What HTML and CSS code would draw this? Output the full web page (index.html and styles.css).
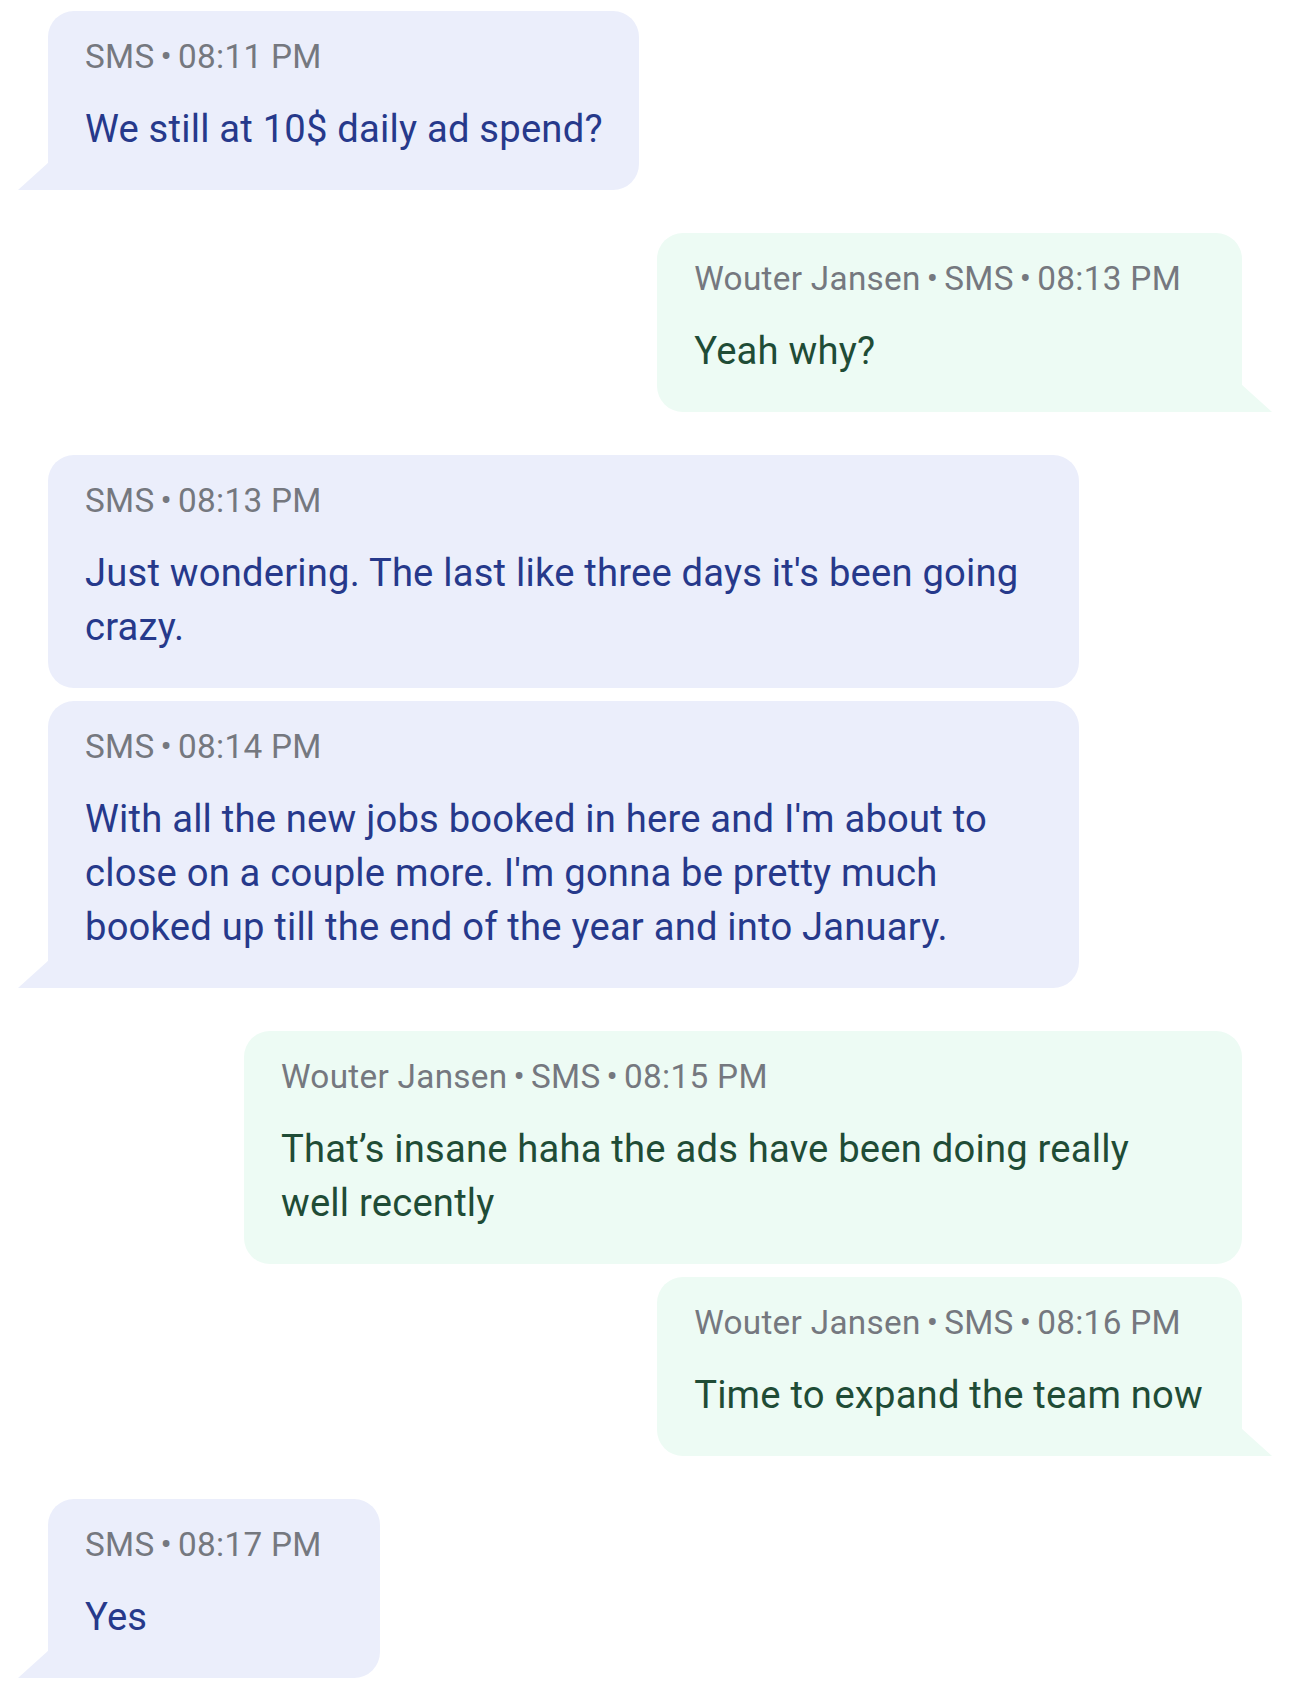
FILE: index.html
```html
<!DOCTYPE html>
<html lang="en">
<head>
<meta charset="utf-8">
<title>SMS conversation</title>
<link rel="stylesheet" href="styles.css">
</head>
<body>
<main class="thread">
  <div class="group">
    <div class="msg msg-in tail">
      <div class="meta">SMS<span class="dot">•</span>08:11 PM</div>
      <div class="text">We still at 10$ daily ad spend?</div>
    </div>
  </div>
  <div class="group">
    <div class="msg msg-out tail">
      <div class="meta">Wouter Jansen<span class="dot">•</span>SMS<span class="dot">•</span>08:13 PM</div>
      <div class="text">Yeah why?</div>
    </div>
  </div>
  <div class="group">
    <div class="msg msg-in">
      <div class="meta">SMS<span class="dot">•</span>08:13 PM</div>
      <div class="text">Just wondering. The last like three days it's been going crazy.</div>
    </div>
    <div class="msg msg-in tail">
      <div class="meta">SMS<span class="dot">•</span>08:14 PM</div>
      <div class="text">With all the new jobs booked in here and I'm about to close on a couple more. I'm gonna be pretty much booked up till the end of the year and into January.</div>
    </div>
  </div>
  <div class="group">
    <div class="msg msg-out">
      <div class="meta">Wouter Jansen<span class="dot">•</span>SMS<span class="dot">•</span>08:15 PM</div>
      <div class="text">That’s insane haha the ads have been doing really well recently</div>
    </div>
    <div class="msg msg-out tail">
      <div class="meta">Wouter Jansen<span class="dot">•</span>SMS<span class="dot">•</span>08:16 PM</div>
      <div class="text">Time to expand the team now</div>
    </div>
  </div>
  <div class="group">
    <div class="msg msg-in tail">
      <div class="meta">SMS<span class="dot">•</span>08:17 PM</div>
      <div class="text">Yes</div>
    </div>
  </div>
</main>
</body>
</html>
```
FILE: styles.css
```css
* { box-sizing: border-box; }
html, body { margin: 0; padding: 0; background: #ffffff; }
body {
  font-family: Roboto, "Noto Sans", "Liberation Sans", sans-serif;
  width: 1290px;
}
.thread {
  display: flex;
  flex-direction: column;
  gap: 43px;
  padding: 11px 48px 0 48px;
}
.group {
  display: flex;
  flex-direction: column;
  gap: 13px;
}
.msg {
  position: relative;
  max-width: 1031px;
  padding: 25px 36px 34px 37px;
  border-radius: 26px;
}
.msg-in {
  align-self: flex-start;
  background: #ebeefb;
  color: #26398b;
}
.msg-out {
  align-self: flex-end;
  max-width: 998px;
  padding-right: 39px;
  background: #edfbf4;
  color: #1f4c36;
}
.meta {
  font-size: 33.3px;
  line-height: 42px;
  color: #75787f;
  letter-spacing: 0.3px;
  padding-right: 22px;
  white-space: nowrap;
}
.dot {
  display: inline-block;
  margin: 0 6px;
}
.text {
  margin-top: 24px;
  font-size: 38.2px;
  line-height: 54px;
  letter-spacing: 0.2px;
}
.msg-in.tail { border-bottom-left-radius: 0; }
.msg-out.tail { border-bottom-right-radius: 0; }
.tail::after {
  content: "";
  position: absolute;
  bottom: 0;
  width: 31px;
  height: 28px;
  background: inherit;
}
.msg-in.tail::after {
  left: -30px;
  clip-path: polygon(100% 0, 100% 100%, 0 100%);
}
.msg-out.tail::after {
  right: -30px;
  clip-path: polygon(0 0, 100% 100%, 0 100%);
}
```
